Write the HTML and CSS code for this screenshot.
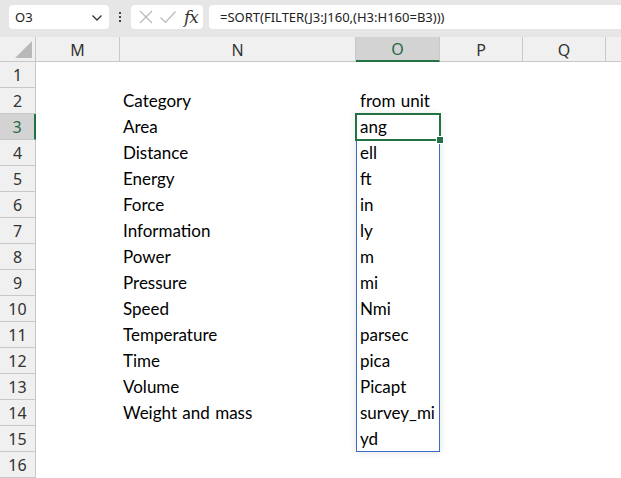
FILE: index.html
```html
<!DOCTYPE html>
<html>
<head>
<meta charset="utf-8">
<link rel="stylesheet" href="styles.css">
</head>
<body>
<div class="app">
  <div class="toolbar">
    <div class="namebox">
      <span class="name">O3</span>
      <svg class="chev" width="12" height="8" viewBox="0 0 12 8"><path d="M1.5 1.5 L6 6 L10.5 1.5" fill="none" stroke="#333" stroke-width="1.3"/></svg>
    </div>
    <div class="dots"><span></span><span></span><span></span></div>
    <div class="iconbox">
      <svg width="16" height="16" viewBox="0 0 16 16"><path d="M2 2 L14 14 M14 2 L2 14" stroke="#b8b8b8" stroke-width="1.2" fill="none"/></svg>
      <svg width="18" height="16" viewBox="0 0 18 16"><path d="M1.5 8.5 L6.5 13.5 L16.5 2.5" stroke="#b8b8b8" stroke-width="1.2" fill="none"/></svg>
      <span class="fx">fx</span>
    </div>
    <div class="formula">=SORT(FILTER(J3:J160,(H3:H160=B3)))</div>
  </div>
  <div class="sheet">
    <div class="corner"><div class="tri"></div></div>
    <div class="colh">M</div>
    <div class="colh">N</div>
    <div class="colh sel">O</div>
    <div class="colh">P</div>
    <div class="colh">Q</div>
    <div class="colh last"></div>

    <div class="rowh">1</div><div class="c"></div><div class="c"></div><div class="c"></div><div class="c"></div><div class="c"></div><div class="c"></div>
    <div class="rowh">2</div><div class="c"></div><div class="c t">Category</div><div class="c u">from unit</div><div class="c"></div><div class="c"></div><div class="c"></div>
    <div class="rowh sel">3</div><div class="c"></div><div class="c t">Area</div><div class="c u">ang</div><div class="c"></div><div class="c"></div><div class="c"></div>
    <div class="rowh">4</div><div class="c"></div><div class="c t">Distance</div><div class="c u">ell</div><div class="c"></div><div class="c"></div><div class="c"></div>
    <div class="rowh">5</div><div class="c"></div><div class="c t">Energy</div><div class="c u">ft</div><div class="c"></div><div class="c"></div><div class="c"></div>
    <div class="rowh">6</div><div class="c"></div><div class="c t">Force</div><div class="c u">in</div><div class="c"></div><div class="c"></div><div class="c"></div>
    <div class="rowh">7</div><div class="c"></div><div class="c t">Information</div><div class="c u">ly</div><div class="c"></div><div class="c"></div><div class="c"></div>
    <div class="rowh">8</div><div class="c"></div><div class="c t">Power</div><div class="c u">m</div><div class="c"></div><div class="c"></div><div class="c"></div>
    <div class="rowh">9</div><div class="c"></div><div class="c t">Pressure</div><div class="c u">mi</div><div class="c"></div><div class="c"></div><div class="c"></div>
    <div class="rowh">10</div><div class="c"></div><div class="c t">Speed</div><div class="c u">Nmi</div><div class="c"></div><div class="c"></div><div class="c"></div>
    <div class="rowh">11</div><div class="c"></div><div class="c t">Temperature</div><div class="c u">parsec</div><div class="c"></div><div class="c"></div><div class="c"></div>
    <div class="rowh">12</div><div class="c"></div><div class="c t">Time</div><div class="c u">pica</div><div class="c"></div><div class="c"></div><div class="c"></div>
    <div class="rowh">13</div><div class="c"></div><div class="c t">Volume</div><div class="c u">Picapt</div><div class="c"></div><div class="c"></div><div class="c"></div>
    <div class="rowh">14</div><div class="c"></div><div class="c t">Weight and mass</div><div class="c u">survey_mi</div><div class="c"></div><div class="c"></div><div class="c"></div>
    <div class="rowh">15</div><div class="c"></div><div class="c"></div><div class="c u">yd</div><div class="c"></div><div class="c"></div><div class="c"></div>
    <div class="rowh">16</div><div class="c"></div><div class="c"></div><div class="c"></div><div class="c"></div><div class="c"></div><div class="c"></div>

    <div class="spill"></div>
    <div class="active"><div class="handle"></div></div>
  </div>
</div>
</body>
</html>
```

FILE: styles.css
```css
* { box-sizing: border-box; }
html, body { margin: 0; padding: 0; background: #fff; }
body { width: 621px; height: 478px; overflow: hidden; font-family: "Lato", "Liberation Sans", sans-serif; }
.app { width: 621px; height: 478px; display: flex; flex-direction: column; }

.toolbar {
  height: 37px; background: #e6e6e6; display: flex; align-items: flex-start;
  padding: 5px 0 0 9px; gap: 0;
}
.namebox {
  width: 100px; height: 24px; background: #fff; border-radius: 4px;
  display: flex; align-items: center; justify-content: space-between;
  padding: 0 6px 0 6px;
  font-family: "Noto Sans", "Liberation Sans", sans-serif; font-size: 13px; color: #222;
}
.chev { margin-top: 1px; }
.dots { width: 22px; height: 24px; display: flex; flex-direction: column; align-items: center; justify-content: center; gap: 2px; }
.dots span { width: 2px; height: 2px; background: #444; display: block; }
.iconbox {
  width: 72px; height: 24px; background: #fff; border-radius: 4px;
  display: flex; align-items: center; padding-left: 7px; gap: 5px;
}
.fx { font-family: "DejaVu Serif", "Liberation Serif", serif; font-style: italic; font-size: 17px; color: #333; margin-left: 2px; letter-spacing: -1px; line-height: 20px; }
.formula {
  margin-left: 6px; flex: 1; height: 24px; background: #fff; border-radius: 4px 0 0 4px;
  padding-left: 11px; line-height: 24px;
  font-family: "Noto Sans", "Liberation Sans", sans-serif; font-size: 13px; color: #222;
}

.sheet {
  position: relative; flex: 1;
  display: grid;
  grid-template-columns: 36px 84px 236px 84px 83px 83px 1fr;
  grid-template-rows: 25px repeat(16, 26px);
}
.corner { background: #f0f0f0; border-right: 1px solid #c8c8c8; border-bottom: 1px solid #c8c8c8; position: relative; }
.tri {
  position: absolute; right: 3px; bottom: 3px; width: 0; height: 0;
  border-left: 17px solid transparent; border-bottom: 17px solid #b9b9b9;
}
.colh {
  background: #f0f0f0; border-right: 1px solid #c8c8c8; border-bottom: 1px solid #c8c8c8;
  display: flex; align-items: center; justify-content: center;
  font-family: "Noto Sans", "Liberation Sans", sans-serif; font-size: 16px; color: #333; padding-top: 1px;
}
.colh.sel { background: #d3d3d3; color: #1e6b44; border-bottom: 2px solid #217346; }
.colh.last { border-right: none; }
.rowh {
  background: #f0f0f0; border-right: 1px solid #c8c8c8; border-bottom: 1px solid #c8c8c8;
  display: flex; align-items: center; justify-content: center;
  font-family: "Noto Sans", "Liberation Sans", sans-serif; font-size: 16px; color: #333;
}
.rowh.sel { background: #d3d3d3; color: #1e6b44; border-right: 2px solid #217346; }
.c { font-size: 17px; color: #000; line-height: 26px; white-space: nowrap; overflow: hidden; word-spacing: 1px; }
.c.t { padding-left: 3px; }
.c.u { padding-left: 4px; }

.spill {
  position: absolute; left: 356px; top: 77px; width: 84px; height: 338px;
  border: 1px solid #3a6bc6;
  box-shadow: 0 0 8px rgba(0,0,0,0.12);
}
.active {
  position: absolute; left: 355px; top: 76px; width: 86px; height: 28px;
  border: 2px solid #217346;
}
.handle {
  position: absolute; right: -5px; bottom: -5px; width: 6px; height: 6px;
  background: #217346; border: 1px solid #fff; box-sizing: content-box;
}
```
